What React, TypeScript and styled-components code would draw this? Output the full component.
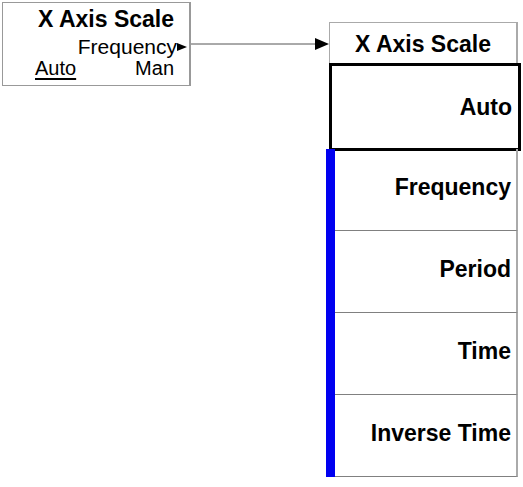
import React from "react";
import styled, { createGlobalStyle } from "styled-components";

const GlobalStyle = createGlobalStyle`
  body {
    margin: 0;
    background: #ffffff;
    font-family: "Liberation Sans", Arial, sans-serif;
    color: #000000;
  }
`;

const Page = styled.div`
  display: flex;
  align-items: flex-start;
  padding: 2px;
  width: 523px;
  height: 487px;
  box-sizing: border-box;
`;

const KeyBox = styled.div`
  width: 189px;
  height: 84px;
  box-sizing: border-box;
  border: 1px solid #999999;
  border-right-width: 2px;
  padding: 3px 15px 0 32px;
  display: flex;
  flex-direction: column;
`;

const KeyTitle = styled.div`
  font-size: 23px;
  font-weight: bold;
  line-height: 26px;
  text-align: right;
  white-space: nowrap;
`;

const KeyLine = styled.div<{ $gap?: number; $size?: number }>`
  display: flex;
  justify-content: space-between;
  align-items: center;
  font-size: ${(p) => p.$size ?? 20}px;
  line-height: 20px;
  margin-top: ${(p) => p.$gap ?? 0}px;
  white-space: nowrap;
`;

const SubMenu = styled.div`
  display: flex;
  align-items: center;
  margin-left: auto;
  margin-right: -13px;
`;

const Selected = styled.span`
  text-decoration: underline;
  text-underline-offset: 3px;
`;

const Connector = styled.div`
  width: 138px;
  height: 12px;
  margin-top: 36px;
  display: flex;
`;

const Panel = styled.div`
  width: 189px;
  margin-top: 20px;
  display: flex;
  flex-direction: column;
`;

const PanelHeader = styled.div`
  height: 41px;
  box-sizing: border-box;
  border: 1px solid #aaaaaa;
  border-bottom: none;
  border-right-width: 2px;
  display: flex;
  align-items: center;
  justify-content: center;
  padding-top: 2px;
  font-size: 23px;
  font-weight: bold;
  white-space: nowrap;
`;

const ActiveKey = styled.div`
  height: 88px;
  margin-right: -3px;
  box-sizing: border-box;
  border: 3px solid #000000;
  display: flex;
  align-items: center;
  justify-content: flex-end;
  padding-right: 6px;
  font-size: 23px;
  font-weight: bold;
`;

const KeyList = styled.div`
  margin-top: -2px;
  margin-left: -3px;
  border-left: 9px solid #0000f0;
  display: flex;
  flex-direction: column;
`;

const KeyRow = styled.div`
  height: 82px;
  box-sizing: border-box;
  border-right: 2px solid #aaaaaa;
  border-bottom: 1px solid #808080;
  display: flex;
  align-items: center;
  justify-content: flex-end;
  padding: 0 5px 4px 0;
  font-size: 23px;
  font-weight: bold;
  white-space: nowrap;
`;

const Arrow = () => (
  <svg width="10" height="10" viewBox="0 0 10 10">
    <polygon points="0,1 10,5 0,9" fill="#000" />
  </svg>
);

const ConnectorLine = () => (
  <svg width="138" height="12" viewBox="0 0 138 12">
    <line x1="0" y1="6" x2="125" y2="6" stroke="#555" strokeWidth="1" />
    <polygon points="124,0 138,6 124,12" fill="#000" />
  </svg>
);

const items = ["Frequency", "Period", "Time", "Inverse Time"];

export default function App() {
  return (
    <>
      <GlobalStyle />
      <Page>
        <KeyBox>
          <KeyTitle>X Axis Scale</KeyTitle>
          <KeyLine $gap={5} $size={21}>
            <SubMenu>
              Frequency
              <Arrow />
            </SubMenu>
          </KeyLine>
          <KeyLine $gap={1}>
            <Selected>Auto</Selected>
            <span>Man</span>
          </KeyLine>
        </KeyBox>
        <Connector>
          <ConnectorLine />
        </Connector>
        <Panel>
          <PanelHeader>X Axis Scale</PanelHeader>
          <ActiveKey>Auto</ActiveKey>
          <KeyList>
            {items.map((item) => (
              <KeyRow key={item}>{item}</KeyRow>
            ))}
          </KeyList>
        </Panel>
      </Page>
    </>
  );
}
